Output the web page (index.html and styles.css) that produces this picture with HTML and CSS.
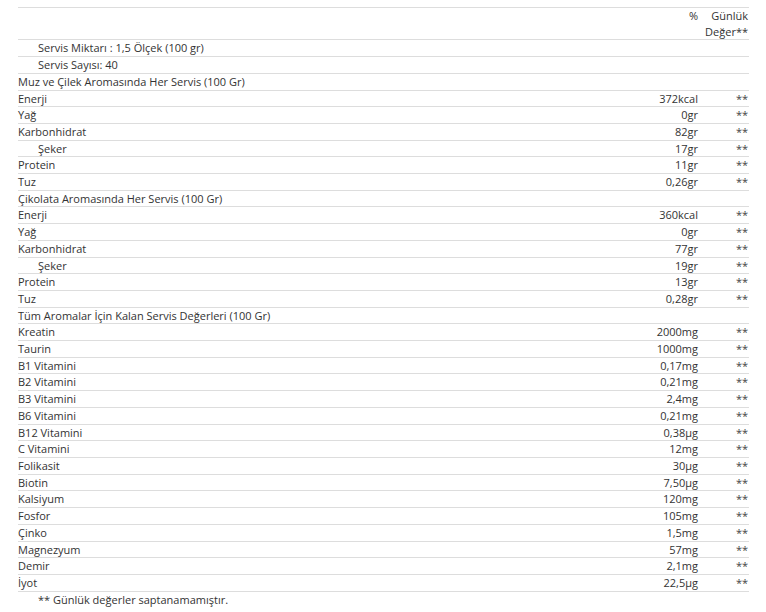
FILE: index.html
```html
<!DOCTYPE html>
<html lang="tr">
<head>
<meta charset="utf-8">
<link rel="stylesheet" href="styles.css">
</head>
<body>
<div class="wrap">
<table class="nut">
<colgroup><col class="c-label"><col class="c-val"><col class="c-dv"></colgroup>
<tbody>
<tr class="head"><td></td><td class="v">%</td><td class="d">Günlük Değer**</td></tr>
<tr><td class="ind">Servis Miktarı : 1,5 Ölçek (100 gr)</td><td></td><td></td></tr>
<tr><td class="ind">Servis Sayısı: 40</td><td></td><td></td></tr>
<tr><td>Muz ve Çilek Aromasında Her Servis (100 Gr)</td><td></td><td></td></tr>
<tr><td>Enerji</td><td class="v">372kcal</td><td class="d">**</td></tr>
<tr><td>Yağ</td><td class="v">0gr</td><td class="d">**</td></tr>
<tr><td>Karbonhidrat</td><td class="v">82gr</td><td class="d">**</td></tr>
<tr><td class="ind">Şeker</td><td class="v">17gr</td><td class="d">**</td></tr>
<tr><td>Protein</td><td class="v">11gr</td><td class="d">**</td></tr>
<tr><td>Tuz</td><td class="v">0,26gr</td><td class="d">**</td></tr>
<tr><td>Çikolata Aromasında Her Servis (100 Gr)</td><td></td><td></td></tr>
<tr><td>Enerji</td><td class="v">360kcal</td><td class="d">**</td></tr>
<tr><td>Yağ</td><td class="v">0gr</td><td class="d">**</td></tr>
<tr><td>Karbonhidrat</td><td class="v">77gr</td><td class="d">**</td></tr>
<tr><td class="ind">Şeker</td><td class="v">19gr</td><td class="d">**</td></tr>
<tr><td>Protein</td><td class="v">13gr</td><td class="d">**</td></tr>
<tr><td>Tuz</td><td class="v">0,28gr</td><td class="d">**</td></tr>
<tr><td>Tüm Aromalar İçin Kalan Servis Değerleri (100 Gr)</td><td></td><td></td></tr>
<tr><td>Kreatin</td><td class="v">2000mg</td><td class="d">**</td></tr>
<tr><td>Taurin</td><td class="v">1000mg</td><td class="d">**</td></tr>
<tr><td>B1 Vitamini</td><td class="v">0,17mg</td><td class="d">**</td></tr>
<tr><td>B2 Vitamini</td><td class="v">0,21mg</td><td class="d">**</td></tr>
<tr><td>B3 Vitamini</td><td class="v">2,4mg</td><td class="d">**</td></tr>
<tr><td>B6 Vitamini</td><td class="v">0,21mg</td><td class="d">**</td></tr>
<tr><td>B12 Vitamini</td><td class="v">0,38µg</td><td class="d">**</td></tr>
<tr><td>C Vitamini</td><td class="v">12mg</td><td class="d">**</td></tr>
<tr><td>Folikasit</td><td class="v">30µg</td><td class="d">**</td></tr>
<tr><td>Biotin</td><td class="v">7,50µg</td><td class="d">**</td></tr>
<tr><td>Kalsiyum</td><td class="v">120mg</td><td class="d">**</td></tr>
<tr><td>Fosfor</td><td class="v">105mg</td><td class="d">**</td></tr>
<tr><td>Çinko</td><td class="v">1,5mg</td><td class="d">**</td></tr>
<tr><td>Magnezyum</td><td class="v">57mg</td><td class="d">**</td></tr>
<tr><td>Demir</td><td class="v">2,1mg</td><td class="d">**</td></tr>
<tr><td>İyot</td><td class="v">22,5µg</td><td class="d">**</td></tr>
<tr class="foot"><td colspan="3" class="ind">** Günlük değerler saptanamamıştır.</td></tr>
</tbody>
</table>
</div>
</body>
</html>
```

FILE: styles.css
```css
html, body {
  margin: 0;
  padding: 0;
  background: #fff;
}
body {
  font-family: "Open Sans", "DejaVu Sans", sans-serif;
  font-size: 11px;
  line-height: 1.428571;
  color: #333;
}
.wrap {
  padding: 7px 17px 0 18px;
}
.nut {
  width: 731px;
  border-collapse: collapse;
  table-layout: fixed;
}
.c-val { width: 100px; }
.c-dv { width: 51px; }
.nut td {
  padding: 0;
  border-top: 1px solid #ddd;
  vertical-align: top;
  white-space: nowrap;
}
.nut td.v { text-align: right; }
.nut td.d {
  text-align: right;
  padding-right: 1px;
  white-space: normal;
  color: #444;
}
.nut td.ind { padding-left: 20px; }
.nut tr:last-child td { border-bottom: 0; }
.head td.d { color: #333; }
```
